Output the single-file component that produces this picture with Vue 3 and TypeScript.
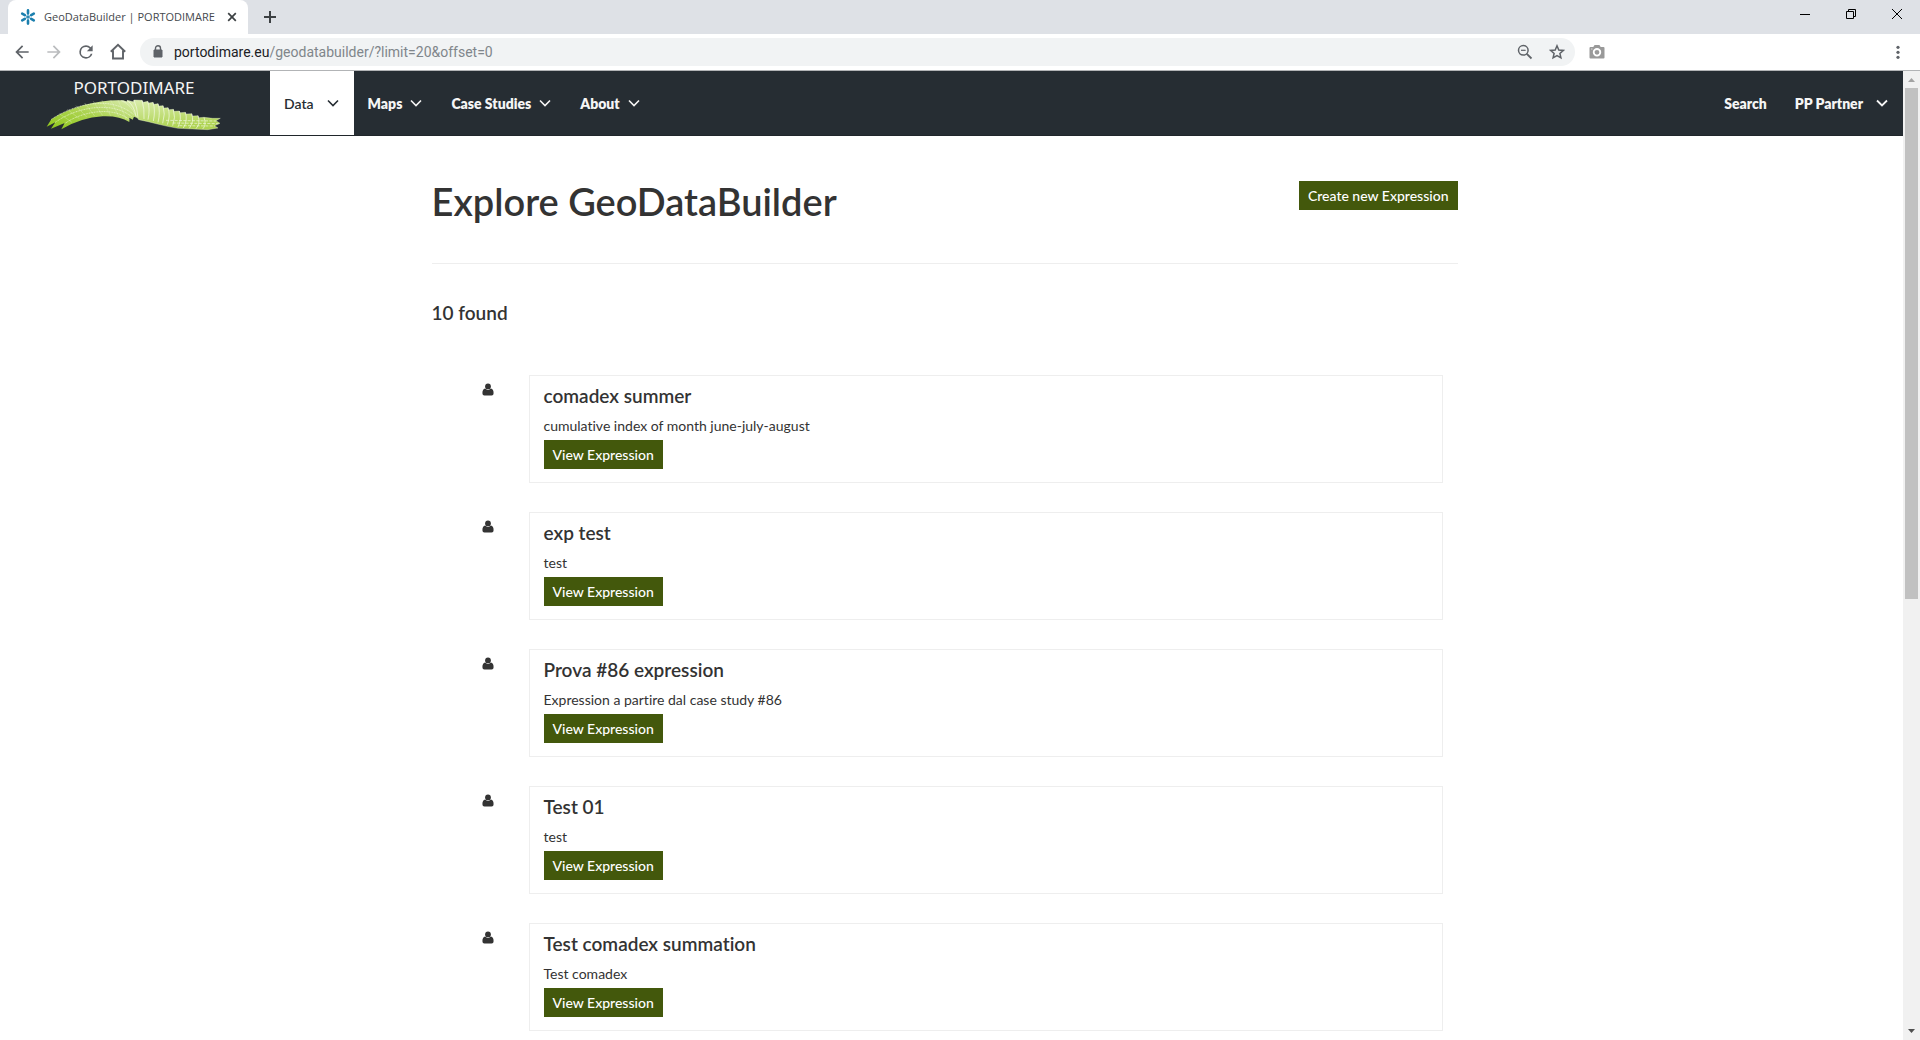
<script setup lang="ts">
interface MenuEntry {
  label: string
  active?: boolean
}
interface Expression {
  title: string
  description: string
}

const menu: MenuEntry[] = [
  { label: 'Data', active: true },
  { label: 'Maps' },
  { label: 'Case Studies' },
  { label: 'About' },
]

const expressions: Expression[] = [
  { title: 'comadex summer', description: 'cumulative index of month june-july-august' },
  { title: 'exp test', description: 'test' },
  { title: 'Prova #86 expression', description: 'Expression a partire dal case study #86' },
  { title: 'Test 01', description: 'test' },
  { title: 'Test comadex summation', description: 'Test comadex' },
]

// Blades on the right half of the logo wave: [tip x, tip y, foot x, foot y]
const blades: number[][] = [
  [428, 98, 418, 154],
  [445, 101, 430, 156],
  [461, 104, 446, 160],
  [476, 108, 460, 164],
  [491, 114, 474, 167],
  [506, 120, 488, 171],
  [522, 125, 504, 174],
  [540, 130, 520, 178],
  [558, 134, 536, 181],
  [577, 138, 554, 182],
  [596, 144, 574, 183],
  [614, 149, 594, 184],
]
</script>

<template>
  <div class="window">
    <header class="tabstrip">
      <div class="tab">
        <svg class="favicon" width="16" height="16" viewBox="0 0 16 16" aria-hidden="true">
          <g stroke="#1b7fae" stroke-width="2.6" stroke-linecap="round">
            <path d="M8 1.4V4.2M8 11.8V14.6M2.2 4.6L4.8 6.1M11.2 9.9L13.8 11.4M13.8 4.6L11.2 6.1M4.8 9.9L2.2 11.4" />
          </g>
          <path d="M8 4.5V11.5M4.8 6.2L11.2 9.8M11.2 6.2L4.8 9.8" stroke="#1b7fae" stroke-width="1" />
        </svg>
        <span class="tab-title">GeoDataBuilder | PORTODIMARE</span>
        <button class="icon-button" type="button" aria-label="Close tab">
          <svg width="10" height="10" viewBox="0 0 10 10"><path d="M1.2 1.2L8.8 8.8M8.8 1.2L1.2 8.8" stroke="#3c4043" stroke-width="1.7" /></svg>
        </button>
      </div>
      <button class="icon-button new-tab" type="button" aria-label="New tab">
        <svg width="14" height="14" viewBox="0 0 14 14"><path d="M7 1V13M1 7H13" stroke="#3c4043" stroke-width="2" /></svg>
      </button>
      <div class="window-controls">
        <button class="icon-button" type="button" aria-label="Minimize">
          <svg width="10" height="10" viewBox="0 0 10 10"><path d="M0 5.5H10" stroke="#000" /></svg>
        </button>
        <button class="icon-button" type="button" aria-label="Restore">
          <svg width="10" height="10" viewBox="0 0 10 10"><path d="M.5 2.5H7.5V9.5H.5zM2.5 2.5V.5H9.5V7.5H7.5" fill="none" stroke="#000" /></svg>
        </button>
        <button class="icon-button" type="button" aria-label="Close">
          <svg width="10" height="10" viewBox="0 0 10 10"><path d="M0 0L10 10M10 0L0 10" stroke="#000" /></svg>
        </button>
      </div>
    </header>

    <div class="toolbar">
      <div class="history">
        <button class="icon-button" type="button" aria-label="Back">
          <svg width="20" height="20" viewBox="0 0 24 24"><path fill="#5f6368" d="M20 11H7.83l5.59-5.59L12 4l-8 8 8 8 1.41-1.41L7.83 13H20v-2z" /></svg>
        </button>
        <button class="icon-button" type="button" aria-label="Forward">
          <svg width="20" height="20" viewBox="0 0 24 24"><path fill="#babcbe" d="M12 4l-1.41 1.41L16.17 11H4v2h12.17l-5.58 5.59L12 20l8-8z" /></svg>
        </button>
        <button class="icon-button" type="button" aria-label="Reload">
          <svg width="20" height="20" viewBox="0 0 24 24"><path fill="#5f6368" d="M17.65 6.35A7.96 7.96 0 0 0 12 4a8 8 0 1 0 7.73 10h-2.08A6 6 0 1 1 12 6c1.66 0 3.14.69 4.22 1.78L13 11h7V4l-2.35 2.35z" /></svg>
        </button>
        <button class="icon-button" type="button" aria-label="Home">
          <svg width="20" height="20" viewBox="0 0 20 20"><path d="M2.8 9.8L10 2.8L17.2 9.8M5 8.5V16.5H15V8.5" fill="none" stroke="#5f6368" stroke-width="1.9" /></svg>
        </button>
      </div>
      <div class="omnibox">
        <svg width="10" height="14" viewBox="0 0 10 14" aria-hidden="true"><path d="M1 5H9V12H1z" fill="#5f6368" stroke="#5f6368" stroke-linejoin="round" /><path d="M2.5 5V3.2a2.5 2.5 0 0 1 5 0V5" fill="none" stroke="#5f6368" stroke-width="1.4" /></svg>
        <div class="address" role="textbox" aria-label="Address"><span class="host">portodimare.eu</span>/geodatabuilder/?limit=20&amp;offset=0</div>
        <button class="icon-button" type="button" aria-label="Zoom">
          <svg width="16" height="16" viewBox="0 0 16 16"><g fill="none" stroke="#5f6368" stroke-width="1.5"><circle cx="6.3" cy="6.3" r="4.8" /><path d="M9.8 9.8L14.5 14.5" stroke-width="1.8" /><path d="M4 6.3H8.6" stroke-width="1.2" /></g></svg>
        </button>
        <button class="icon-button" type="button" aria-label="Bookmark">
          <svg width="16" height="16" viewBox="0 0 16 16"><path d="M8 1.8L9.8 6L14.3 6.4L10.9 9.4L11.9 13.8L8 11.5L4.1 13.8L5.1 9.4L1.7 6.4L6.2 6z" fill="none" stroke="#5f6368" stroke-width="1.5" /></svg>
        </button>
      </div>
      <button class="icon-button camera" type="button" aria-label="Capture page">
        <svg width="16" height="16" viewBox="0 0 16 16"><path d="M1.5 3H4.3L5.6 1H10.4L11.7 3H14.5Q15.5 3 15.5 4V13.5Q15.5 14.5 14.5 14.5H1.5Q.5 14.5 .5 13.5V4Q.5 3 1.5 3z" fill="#999" /><circle cx="8" cy="8.3" r="3.3" fill="none" stroke="#fff" stroke-width="1.8" /><path d="M2 5H3.5" stroke="#ddd" /></svg>
      </button>
      <button class="icon-button kebab" type="button" aria-label="Browser menu">
        <svg width="16" height="16" viewBox="0 0 16 16"><g fill="#5f6368"><circle cx="8" cy="3.3" r="1.6" /><circle cx="8" cy="8.3" r="1.6" /><circle cx="8" cy="13.3" r="1.6" /></g></svg>
      </button>
    </div>

    <div class="viewport">
      <div class="page">
        <nav class="navbar">
          <a class="brand" href="#">
            <span class="brand-name">PORTODIMARE</span>
            <svg class="wave" width="176" height="32" viewBox="140 94 528 96" aria-hidden="true">
              <defs>
                <linearGradient id="wave-left" x1="0" y1="1" x2="1" y2="0">
                  <stop offset="0" stop-color="#8fc71a" />
                  <stop offset=".5" stop-color="#acd350" />
                  <stop offset="1" stop-color="#dcedb4" />
                </linearGradient>
                <linearGradient id="wave-right" x1="0" y1="0" x2=".3" y2="1">
                  <stop offset="0" stop-color="#dceeb0" />
                  <stop offset="1" stop-color="#aed352" />
                </linearGradient>
              </defs>
              <path fill="url(#wave-left)" d="M142 177L156 155C220 112 310 94 372 98L400 110L416 152L404 147L400 156L390 150V163Q360 144 310 146Q245 150 186 185L196 166L155 183L168 164z" />
              <g fill="none" stroke="#f4fae4" stroke-width="2" stroke-dasharray="3 2">
                <path d="M156 155C220 112 330 80 402 140" />
                <path d="M168 164C225 122 335 96 398 148" />
                <path d="M196 168C245 132 340 114 390 156" />
              </g>
              <g fill="none" stroke="#e4f2c4" stroke-width="1">
                <path d="M180 138L218 164M204 125L240 153M230 114L262 148M256 106L286 145M282 101L310 144M308 98L334 144M334 97L358 146M356 97L380 154" />
              </g>
              <path fill="url(#wave-right)" stroke="#f2f9df" d="M366 99L382 103L384 98L402 102L404 97L428 98L432 104L445 101L448 106L461 104L463 110L476 108L478 115L491 114L493 121L506 120L508 126L522 125L524 131L540 130L542 135L558 134L560 139L577 138L579 145L596 144L598 150L614 149L640 152L663 152L650 159L662 167L646 174L656 181L625 186L580 184L536 182L504 176L474 169L446 162L418 156L408 142Q396 112 366 99z" />
              <g fill="none" stroke="#f6fbe9" stroke-width="2">
                <path d="M384 99Q404 112 410 146M404 98Q414 118 416 150" />
                <path v-for="b in blades" :key="b[0]" :d="`M${b[0]} ${b[1]}Q${b[0] + 8} ${b[1] + 24} ${b[2] + 16} ${b[3]}`" />
              </g>
              <path d="M500 158L650 160M520 166L658 168M540 174L646 175" fill="none" stroke="#f2f9df" stroke-width="2" stroke-dasharray="9 4" />
            </svg>
          </a>
          <a v-for="entry in menu" :key="entry.label" href="#" class="nav-link" :class="{ active: entry.active }">
            {{ entry.label }}
            <svg width="14" height="8" viewBox="0 0 14 8" aria-hidden="true"><path d="M2 1.5L7 6.5L12 1.5" fill="none" stroke="currentColor" stroke-width="1.6" /></svg>
          </a>
          <a href="#" class="nav-link search">Search</a>
          <a href="#" class="nav-link account">
            PP Partner
            <svg width="14" height="8" viewBox="0 0 14 8" aria-hidden="true"><path d="M2 1.5L7 6.5L12 1.5" fill="none" stroke="currentColor" stroke-width="1.8" /></svg>
          </a>
        </nav>

        <main class="content">
          <div class="page-header">
            <h1>Explore GeoDataBuilder</h1>
            <button class="btn" type="button">Create new Expression</button>
          </div>
          <h2 class="count">10 found</h2>
          <ul class="results">
            <li v-for="item in expressions" :key="item.title" class="result">
              <svg class="user" width="12" height="13" viewBox="0 0 12 13" aria-hidden="true"><g fill="#333"><circle cx="6" cy="3.4" r="2.9" /><path d="M3.1 5.6Q6 8.2 8.9 5.6Q11.6 6.2 11.6 10.2Q11.6 12.4 9.6 12.4H2.4Q.4 12.4 .4 10.2Q.4 6.2 3.1 5.6z" /></g></svg>
              <article class="card">
                <h3>{{ item.title }}</h3>
                <p>{{ item.description }}</p>
                <button class="btn" type="button">View Expression</button>
              </article>
            </li>
          </ul>
        </main>
      </div>
      <div class="scrollbar" aria-hidden="true">
        <svg width="17" height="17" viewBox="0 0 17 17"><path d="M5 11L8.5 7L12 11z" fill="#a3a3a3" /></svg>
        <div class="thumb"></div>
        <div class="track"></div>
        <svg width="17" height="17" viewBox="0 0 17 17"><path d="M5 6L8.5 10L12 6z" fill="#505050" /></svg>
      </div>
    </div>
  </div>
</template>

<style>
body {
  margin: 0;
  background: #fff;
}
</style>

<style scoped>
* {
  box-sizing: border-box;
}
.window {
  display: flex;
  flex-direction: column;
  height: 100vh;
  overflow: hidden;
  font-family: Lato, "Liberation Sans", sans-serif;
  font-size: 14px;
  font-variant-ligatures: none;
  color: #333;
}
svg {
  display: block;
  flex: none;
}
a {
  color: inherit;
  text-decoration: none;
}
.icon-button {
  display: flex;
  align-items: center;
  justify-content: center;
  width: 20px;
  height: 20px;
  padding: 0;
  border: 0;
  background: none;
}

/* Browser chrome */
.tabstrip {
  display: flex;
  align-items: flex-end;
  height: 34px;
  padding-left: 8px;
  background: #dee1e6;
}
.tab {
  display: flex;
  align-items: center;
  width: 240px;
  height: 34px;
  padding: 0 6px 0 12px;
  border-radius: 8px 8px 0 0;
  background: #fff;
}
.tab-title {
  flex: 1;
  margin-left: 8px;
  font: 11px/16px "Open Sans", "Noto Sans", sans-serif;
  color: #45494d;
  white-space: nowrap;
}
.new-tab {
  align-self: center;
  margin-left: 12px;
}
.window-controls {
  display: flex;
  align-self: flex-start;
  gap: 26px;
  margin: 4px 13px 0 auto;
}
.toolbar {
  display: flex;
  align-items: center;
  height: 37px;
  padding: 0 12px;
  border-bottom: 1px solid #b2b4b6;
  background: #fff;
}
.history {
  display: flex;
  gap: 12px;
}
.omnibox {
  display: flex;
  flex: 1;
  align-items: center;
  height: 28px;
  margin-left: 12px;
  padding: 0 8px 0 13px;
  border-radius: 14px;
  background: #f1f3f4;
}
.omnibox .icon-button {
  margin-left: 12px;
}
.address {
  flex: 1;
  margin-left: 11px;
  font: 14px/20px Roboto, "Noto Sans", sans-serif;
  color: #80868b;
}
.host {
  color: #202124;
}
.camera {
  margin-left: 12px;
}
.kebab {
  margin-left: 281px;
}

/* Page and scrollbar */
.viewport {
  display: flex;
  flex: 1;
  min-height: 0;
}
.page {
  flex: 1;
  min-width: 0;
  overflow: hidden;
}
.scrollbar {
  display: flex;
  flex-direction: column;
  width: 17px;
  background: #f1f1f1;
}
.thumb {
  flex: 511;
  margin: 0 2px;
  background: #c1c1c1;
}
.track {
  flex: 424;
}

/* Site navigation */
.navbar {
  display: flex;
  height: 65px;
  border-bottom: 1px solid #20262b;
  background: #262d33;
  color: #f5f5f5;
}
.brand {
  display: flex;
  flex-direction: column;
  align-items: center;
  width: 270px;
  padding: 6px 2px 0 0;
}
.brand-name {
  font: 17px/22px "Noto Sans", "Open Sans", sans-serif;
}
.nav-link {
  display: flex;
  align-items: center;
  gap: 7px;
  padding: 2px 14px;
  font-weight: 800;
}
.nav-link.active {
  gap: 12px;
  background: #fff;
  color: #262d33;
  font-weight: 600;
}
.search {
  margin-left: auto;
}
.account {
  gap: 12px;
}

/* Expression list */
.content {
  max-width: 1040px;
  margin: 0 auto;
  padding: 45px 14px 0 0;
}
.page-header {
  display: flex;
  align-items: flex-start;
  justify-content: space-between;
  height: 83px;
  border-bottom: 1px solid #eee;
}
h1,
h2,
h3,
p {
  margin: 0;
}
h1 {
  font-size: 38px;
  line-height: 40px;
  font-weight: 600;
}
.btn {
  height: 29px;
  padding: 0 9px;
  border: 0;
  background: #43580c;
  color: #fff;
  font: 500 14px/28px Lato, "Liberation Sans", sans-serif;
  font-variant-ligatures: none;
}
.count {
  margin-top: 38px;
  font-size: 19px;
  line-height: 22px;
  font-weight: 600;
}
.results {
  display: flex;
  flex-direction: column;
  gap: 29px;
  margin: 51px 15px 0 50px;
  padding: 0;
  list-style: none;
}
.result {
  display: flex;
}
.user {
  margin: 8px 35px 0 0;
}
.card {
  flex: 1;
  height: 108px;
  padding: 9px 14px;
  border: 1px solid #eee;
}
.card h3 {
  font-size: 19px;
  line-height: 22px;
  font-weight: 600;
}
.card p {
  margin-top: 9px;
  line-height: 20px;
}
.card .btn {
  display: block;
  margin-top: 4px;
}
</style>
